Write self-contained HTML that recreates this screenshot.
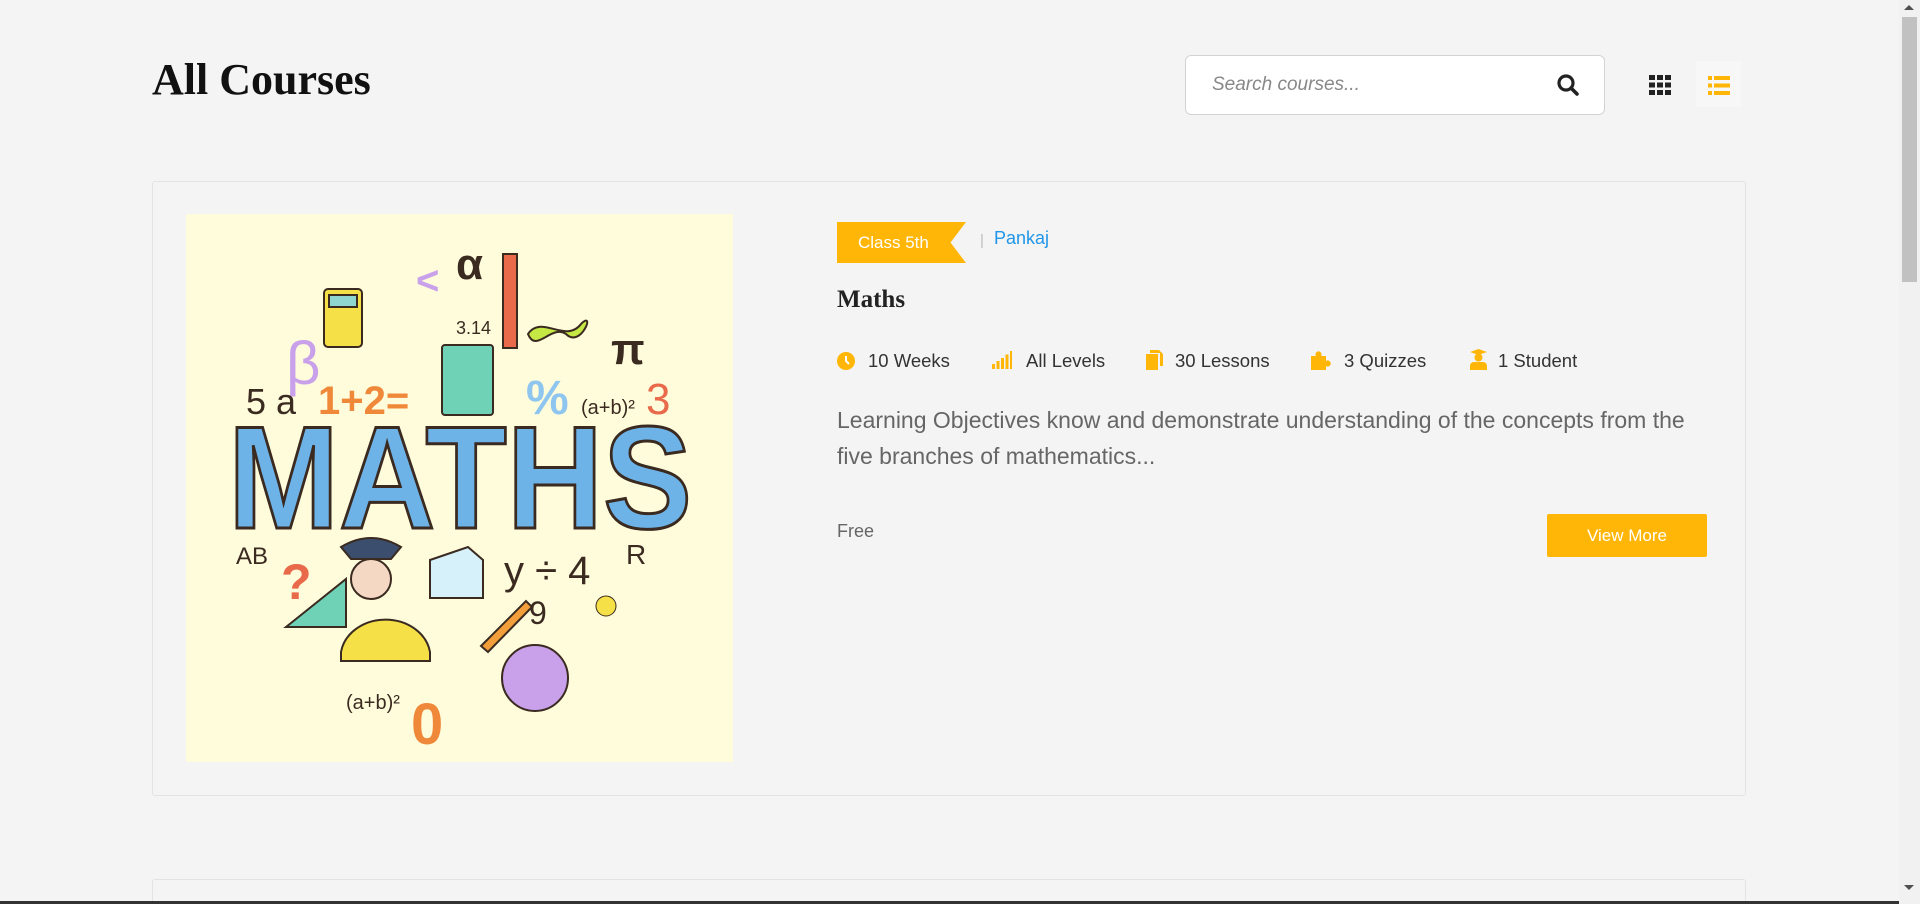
<!DOCTYPE html>
<html><head><meta charset="utf-8">
<style>
*{box-sizing:border-box;margin:0;padding:0}
html,body{width:1920px;height:904px;overflow:hidden;background:#f3f4f3;font-family:"Liberation Sans",sans-serif;position:relative}
.abs{position:absolute}
h1{position:absolute;left:152px;top:54px;font-family:"Liberation Serif",serif;font-weight:bold;font-size:44px;color:#111}
.search{left:1185px;top:55px;width:420px;height:60px;background:#fff;border:1px solid #d3d3d3;border-radius:6px}
.search span{position:absolute;left:26px;top:18px;font-style:italic;color:#888;font-size:19px}
.card{left:152px;top:181px;width:1594px;height:615px;border:1px solid #e3e3e3;border-radius:3px}
.card2{left:152px;top:879px;width:1594px;height:40px;border:1px solid #e3e3e3;border-radius:3px}
.badge{left:837px;top:222px;width:129px;height:41px;background:#ffb606;color:#fff;font-size:17px;line-height:41px;padding-left:21px;clip-path:polygon(0 0,100% 0,88% 50%,100% 100%,0 100%)}
.meta{top:350px;font-size:18.5px;color:#333;line-height:22px}
.desc{left:837px;top:402px;width:880px;font-size:23px;line-height:36px;color:#666}
.btn{left:1547px;top:514px;width:160px;height:43px;background:#ffb606;color:#fff;font-size:17px;text-align:center;line-height:43px;border-radius:2px}
</style></head><body>
<h1>All Courses</h1>
<div class="abs search"><span>Search courses...</span>
<svg class="abs" style="left:370px;top:17px" width="24" height="24" viewBox="0 0 24 24"><circle cx="10" cy="10" r="7" fill="none" stroke="#222" stroke-width="3.2"/><line x1="15" y1="15" x2="21" y2="21" stroke="#222" stroke-width="3.6" stroke-linecap="round"/></svg></div>
<svg class="abs" style="left:1649px;top:75px" width="22" height="20" viewBox="0 0 22 20" fill="#222"><rect x="0" y="0" width="6" height="5"/><rect x="8" y="0" width="6" height="5"/><rect x="16" y="0" width="6" height="5"/><rect x="0" y="7.5" width="6" height="5"/><rect x="8" y="7.5" width="6" height="5"/><rect x="16" y="7.5" width="6" height="5"/><rect x="0" y="15" width="6" height="5"/><rect x="8" y="15" width="6" height="5"/><rect x="16" y="15" width="6" height="5"/></svg>
<div class="abs" style="left:1696px;top:61px;width:45px;height:46px;background:#f7f7f7"></div>
<svg class="abs" style="left:1708px;top:76px" width="22" height="19" viewBox="0 0 22 19" fill="#ffb606"><rect x="0" y="0" width="4" height="4"/><rect x="6" y="0" width="16" height="4"/><rect x="0" y="7.5" width="4" height="4"/><rect x="6" y="7.5" width="16" height="4"/><rect x="0" y="15" width="4" height="4"/><rect x="6" y="15" width="16" height="4"/></svg>

<div class="abs card"></div>
<div class="abs card2"></div>

<svg class="abs" style="left:186px;top:214px" width="547" height="548" viewBox="0 0 547 548">
<rect width="547" height="548" fill="#fffcdc"/>
<g stroke="#3a2a20" stroke-width="2">
<rect x="138" y="75" width="38" height="58" rx="4" fill="#f5e047"/>
<rect x="143" y="81" width="28" height="12" fill="#8fd5d0"/>
<rect x="256" y="131" width="51" height="70" rx="3" fill="#6fd1b5"/>
<rect x="317" y="40" width="14" height="94" fill="#e86a4a"/>
<path d="M155 447 L244 447 L244 438 A45 38 0 0 0 155 438Z" fill="#f5e047"/>
<path d="M100 413 L160 365 L160 413Z" fill="#6fd1b5"/>
<path d="M244 346 L282 333 L297 346 L297 384 L244 384Z" fill="#d7f1fa"/>
<circle cx="349" cy="464" r="33" fill="#c9a1ea"/>
<path d="M342 120 C355 100 380 130 395 110 C410 95 395 135 380 120 C365 110 350 140 342 120Z" fill="#c6e845"/>
<path d="M155 333 Q185 315 215 333 L205 345 L165 345Z" fill="#3b4e6e"/>
<circle cx="185" cy="365" r="20" fill="#f5d8c4"/>
<path d="M295 432 L340 387 L346 393 L302 438Z" fill="#f29e3a"/>
</g>
<g font-family="Liberation Sans,sans-serif" font-weight="bold">
<text x="42" y="314" font-size="146" textLength="464" lengthAdjust="spacingAndGlyphs" fill="#6db3e8" stroke="#3a2a20" stroke-width="3">MATHS</text>
<text x="132" y="200" font-size="40" fill="#f0883a">1+2=</text>
<text x="460" y="200" font-size="44" fill="#e86a4a" font-weight="normal">3</text>
<text x="100" y="170" font-size="60" fill="#c9a1ea" font-weight="normal">β</text>
<text x="270" y="65" font-size="44" fill="#3a2a20">α</text>
<text x="425" y="150" font-size="44" fill="#3a2a20">π</text>
<text x="340" y="200" font-size="48" fill="#8fc6ef">%</text>
<text x="95" y="385" font-size="50" fill="#e86a4a">?</text>
<text x="225" y="530" font-size="58" fill="#f0883a">0</text>
<text x="230" y="80" font-size="40" fill="#c9a1ea">&lt;</text>
<text x="60" y="200" font-size="36" fill="#3a2a20" font-weight="normal">5 a</text>
<text x="318" y="370" font-size="40" fill="#3a2a20" font-weight="normal">y ÷ 4</text>
<text x="270" y="120" font-size="18" fill="#3a2a20" font-weight="normal">3.14</text>
<text x="160" y="495" font-size="20" fill="#3a2a20" font-weight="normal">(a+b)²</text>
<text x="395" y="200" font-size="20" fill="#3a2a20" font-weight="normal">(a+b)²</text>
<text x="50" y="350" font-size="24" fill="#3a2a20" font-weight="normal">AB</text>
<text x="343" y="410" font-size="32" fill="#3a2a20" font-weight="normal">9</text>
<text x="440" y="350" font-size="28" fill="#3a2a20" font-weight="normal">R</text>
</g>
<circle cx="420" cy="392" r="10" fill="#f5e047" stroke="#3a2a20"/>
</svg>

<div class="abs badge">Class 5th</div>
<div class="abs" style="left:980px;top:232px;font-size:15px;color:#bbb">|</div>
<div class="abs" style="left:994px;top:228px;font-size:18px;color:#2196e8">Pankaj</div>
<div class="abs" style="left:837px;top:286px;font-family:'Liberation Serif',serif;font-weight:bold;font-size:25px;color:#222">Maths</div>

<svg class="abs" style="left:837px;top:352px" width="18" height="18" viewBox="0 0 18 18"><circle cx="9" cy="9" r="9" fill="#ffb606"/><path d="M9 4v5l3 3" stroke="#fff" stroke-width="2" fill="none"/></svg>
<div class="abs meta" style="left:868px">10 Weeks</div>
<svg class="abs" style="left:992px;top:351px" width="20" height="18" viewBox="0 0 20 18" fill="#ffb606"><rect x="0" y="13" width="3" height="5"/><rect x="4.5" y="10" width="3" height="8"/><rect x="9" y="7" width="3" height="11"/><rect x="13.5" y="3.5" width="3" height="14.5"/><rect x="18" y="0" width="2" height="18"/></svg>
<div class="abs meta" style="left:1026px">All Levels</div>
<svg class="abs" style="left:1146px;top:350px" width="17" height="20" viewBox="0 0 17 20" fill="#ffb606"><rect x="0" y="4" width="12" height="16"/><path d="M4 0h9l4 4v12h-3V3H4z"/></svg>
<div class="abs meta" style="left:1175px">30 Lessons</div>
<svg class="abs" style="left:1311px;top:350px" width="20" height="20" viewBox="0 0 20 20" fill="#ffb606"><path d="M0 6h5a3 3 0 1 1 5 0h5v5a3 3 0 1 1 0 5v4H0z"/></svg>
<div class="abs meta" style="left:1344px">3 Quizzes</div>
<svg class="abs" style="left:1469px;top:349px" width="19" height="21" viewBox="0 0 19 21" fill="#ffb606"><path d="M1 3L9.5 0 18 3 9.5 6z"/><circle cx="9.5" cy="8.5" r="4"/><path d="M1 21v-4a4 4 0 0 1 4-4h9a4 4 0 0 1 4 4v4z"/></svg>
<div class="abs meta" style="left:1498px">1 Student</div>

<div class="abs desc">Learning Objectives know and demonstrate understanding of the concepts from the five branches of mathematics...</div>
<div class="abs" style="left:837px;top:521px;font-size:18px;color:#666">Free</div>
<div class="abs btn">View More</div>

<div class="abs" style="left:1899px;top:0;width:21px;height:904px;background:#f1f1f1"></div>
<div class="abs" style="left:1902px;top:17px;width:15px;height:265px;background:#c1c1c1"></div>
<div class="abs" style="left:1904px;top:5px;width:0;height:0;border-left:5px solid transparent;border-right:5px solid transparent;border-bottom:5px solid #505050"></div>
<div class="abs" style="left:1904px;top:885px;width:0;height:0;border-left:5px solid transparent;border-right:5px solid transparent;border-top:5px solid #505050"></div>
<div class="abs" style="left:0;top:901px;width:1899px;height:3px;background:#333"></div>
</body></html>
